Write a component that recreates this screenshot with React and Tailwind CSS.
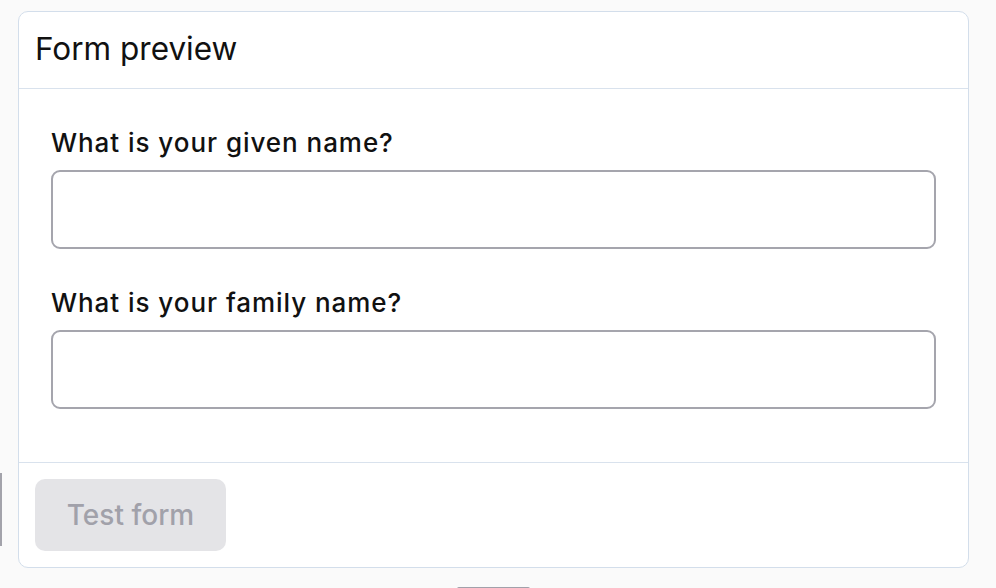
import { useState } from 'react'

export default function App() {
  const [givenName, setGivenName] = useState('')
  const [familyName, setFamilyName] = useState('')

  return (
    <div className="relative w-[996px] h-[588px] overflow-hidden bg-[#fafafa] font-['Inter',sans-serif] text-[#111]">
      {/* fragments of neighbouring elements cut off by the viewport */}
      <div className="absolute left-0 top-[473px] h-[73px] w-[2px] bg-[#a3a3ab]" />
      <div className="absolute left-[457px] top-[587px] h-[4px] w-[73px] rounded-full bg-[#a1a1aa]" />

      <div className="pl-[18px] pt-[11px]">
        <div className="w-[951px] h-[557px] flex flex-col rounded-[10px] border-[1.5px] border-[#d3deeb] bg-white">
          <div className="px-[16px] pt-[17px] pb-[19px] border-b-[1.5px] border-[#d9e2ed]">
            <h2 className="text-[31.5px] leading-[40px] font-normal">Form preview</h2>
          </div>

          <div className="flex-1 px-[32px] pt-[38px] pb-[52px] border-b-[1.5px] border-[#d9e2ed]">
            <label className="block">
              <span className="block text-[26px] leading-[32px] font-[450] tracking-[0.95px]">What is your given name?</span>
              <input
                type="text"
                value={givenName}
                onChange={(e) => setGivenName(e.target.value)}
                className="mt-[11px] block w-full h-[79px] rounded-[9px] border-2 border-[#a5a5ad] bg-white px-4 text-[26px] outline-none"
              />
            </label>
            <label className="block mt-[38px]">
              <span className="block text-[26px] leading-[32px] font-[450] tracking-[0.95px]">What is your family name?</span>
              <input
                type="text"
                value={familyName}
                onChange={(e) => setFamilyName(e.target.value)}
                className="mt-[11px] block w-full h-[79px] rounded-[9px] border-2 border-[#a5a5ad] bg-white px-4 text-[26px] outline-none"
              />
            </label>
          </div>

          <div className="px-[16px] pt-[16px] pb-[16px]">
            <button
              type="button"
              disabled
              className="h-[72px] w-[191px] rounded-[10px] bg-[#e4e4e7] text-[28px] font-medium text-[#a1a1aa] flex items-center justify-center"
            >
              Test form
            </button>
          </div>
        </div>
      </div>
    </div>
  )
}
